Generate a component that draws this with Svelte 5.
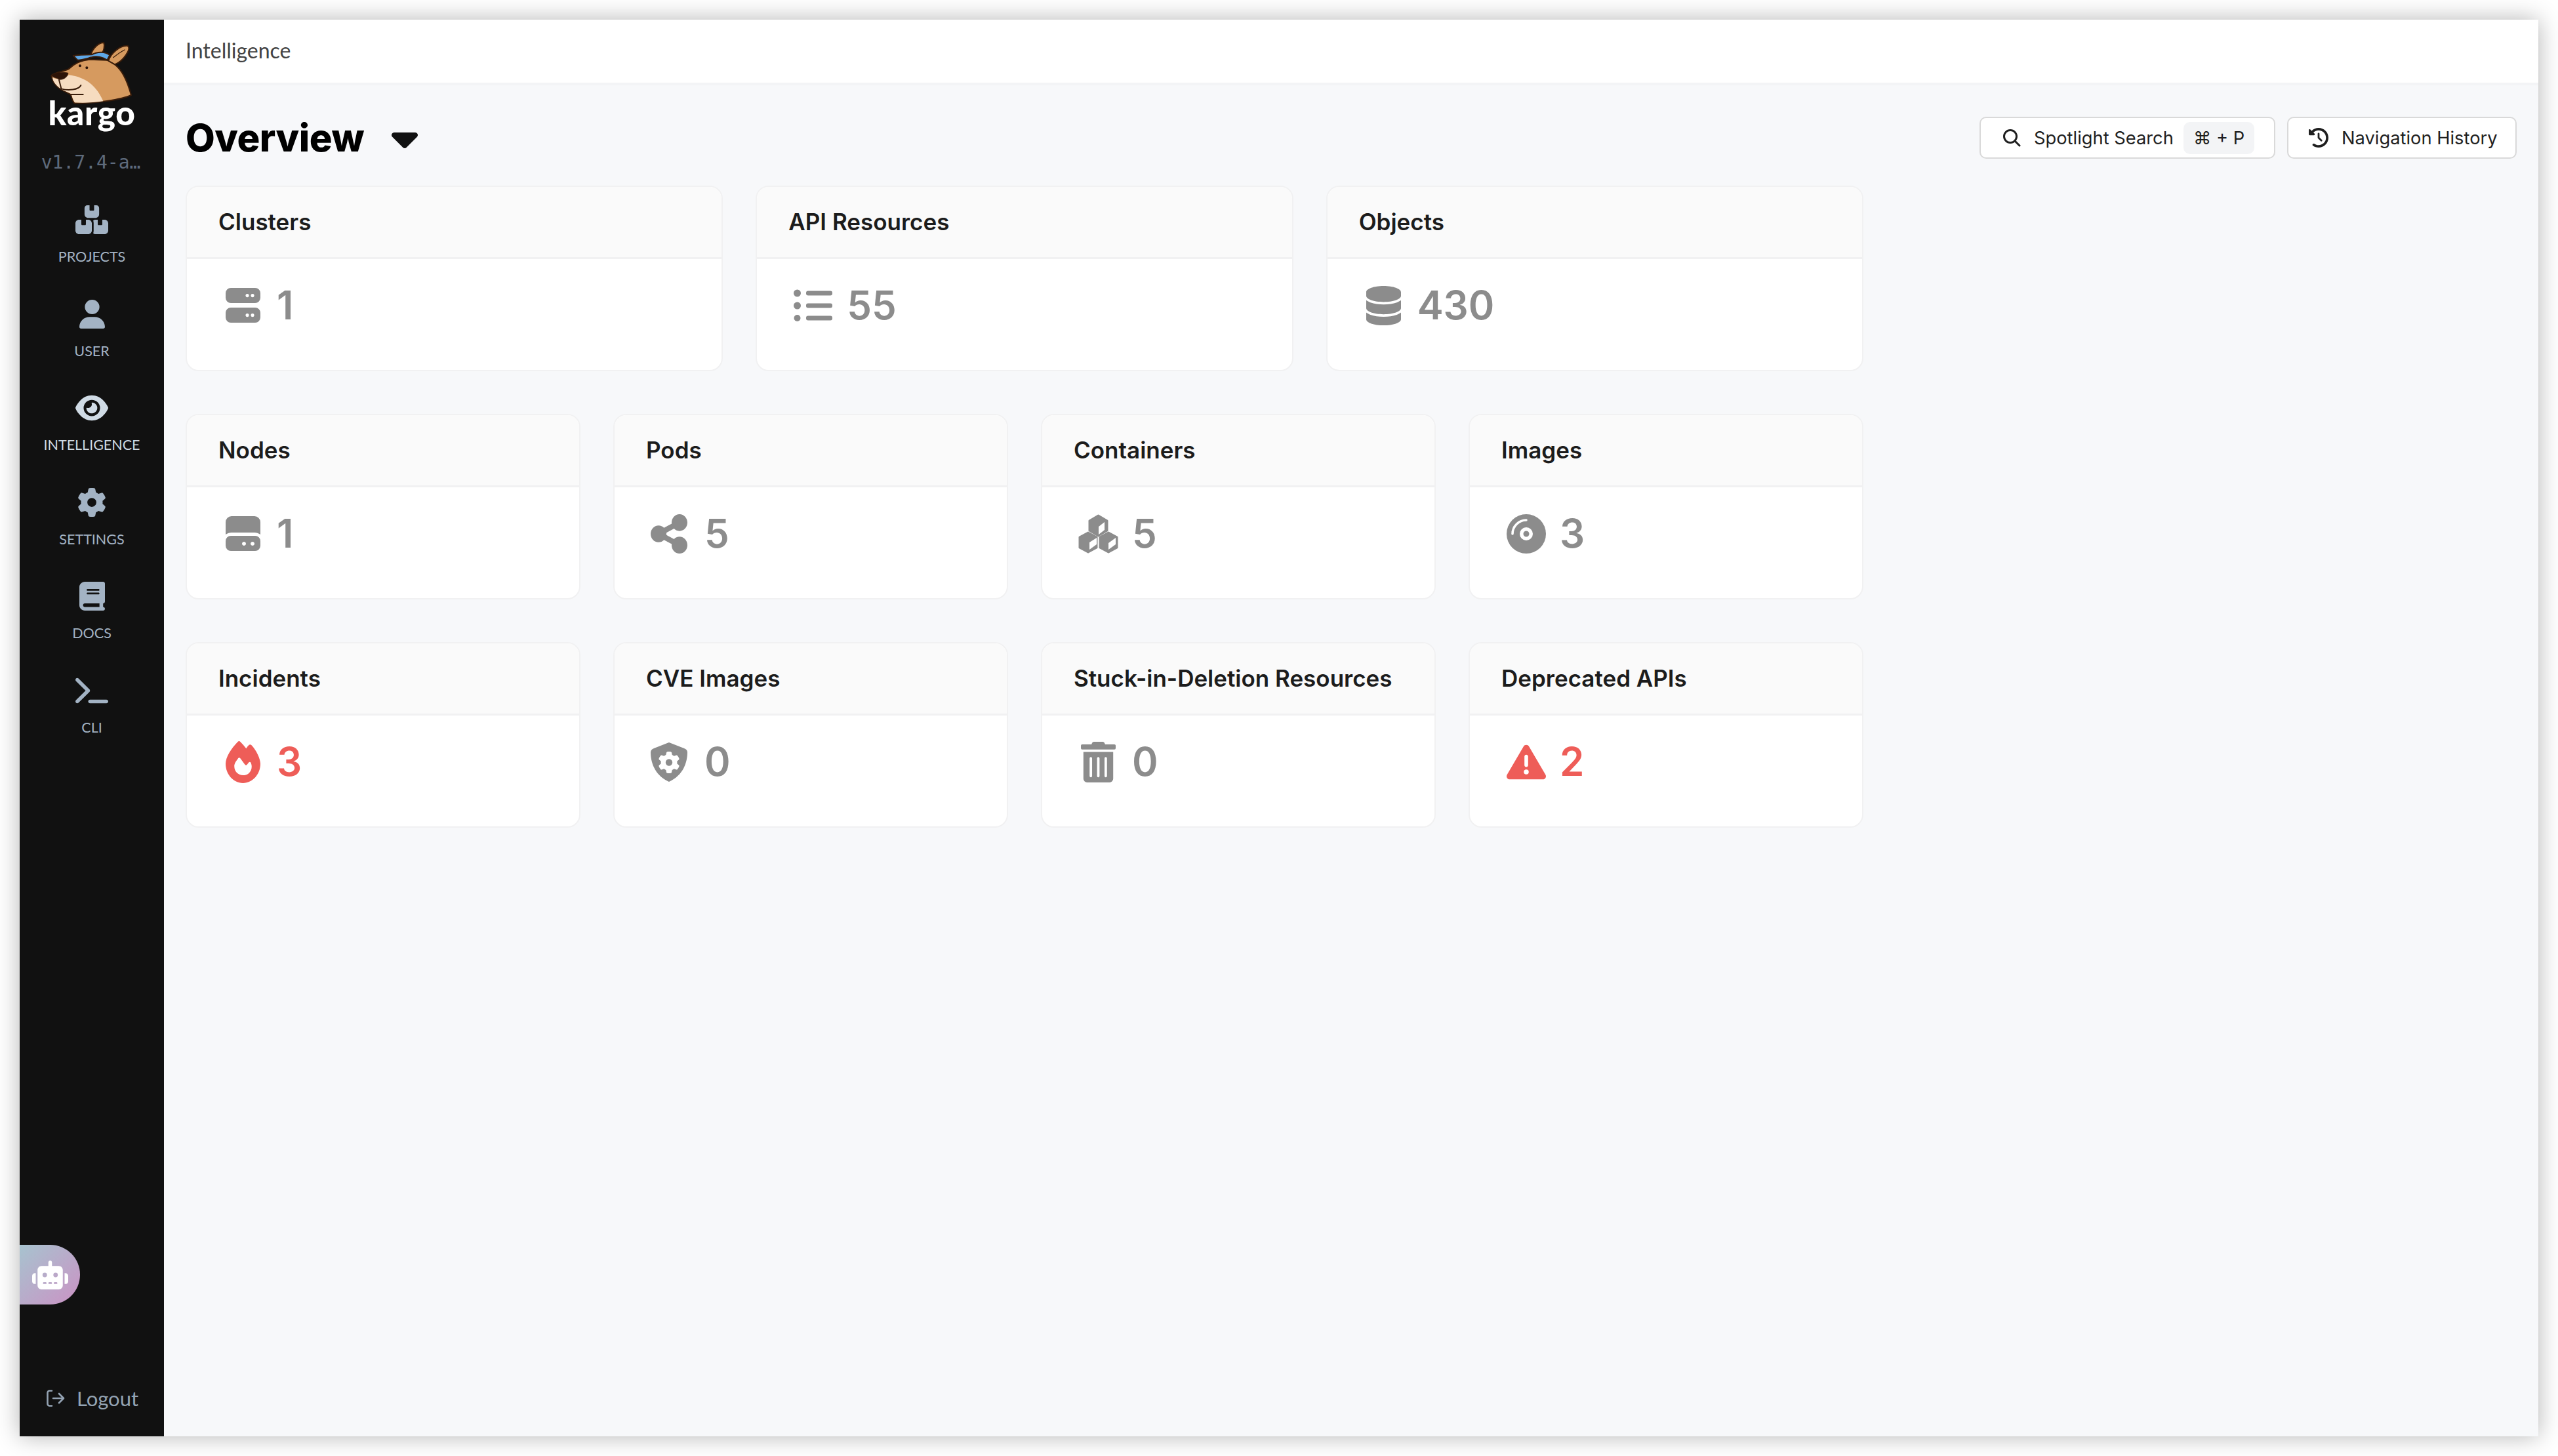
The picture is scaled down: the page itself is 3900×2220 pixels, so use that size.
<script>
  // FontAwesome-style glyphs, drawn in each icon's own viewBox
  const gear = 'M495.9 166.6c3.2 8.7 .5 18.4-6.4 24.6l-43.3 39.4c1.1 8.3 1.7 16.8 1.7 25.4s-.6 17.1-1.7 25.4l43.3 39.4c6.9 6.2 9.6 15.9 6.4 24.6c-4.4 11.9-9.7 23.3-15.8 34.3l-4.7 8.1c-6.6 11-14 21.4-22.1 31.2c-5.9 7.2-15.7 9.6-24.5 6.8l-55.7-17.7c-13.4 10.3-28.2 18.9-44 25.4l-12.5 57.1c-2 9.1-9 16.3-18.2 17.8c-13.8 2.3-28 3.5-42.5 3.5s-28.7-1.2-42.5-3.5c-9.2-1.5-16.2-8.7-18.2-17.8l-12.5-57.1c-15.8-6.5-30.6-15.1-44-25.4L83.1 425.9c-8.8 2.8-18.6 .3-24.5-6.8c-8.1-9.8-15.5-20.2-22.1-31.2l-4.7-8.1c-6.1-11-11.4-22.4-15.8-34.3c-3.2-8.7-.5-18.4 6.4-24.6l43.3-39.4C64.6 273.1 64 264.6 64 256s.6-17.1 1.7-25.4L22.4 191.2c-6.9-6.2-9.6-15.9-6.4-24.6c4.4-11.9 9.7-23.3 15.8-34.3l4.7-8.1c6.6-11 14-21.4 22.1-31.2c5.9-7.2 15.7-9.6 24.5-6.8l55.7 17.7c13.4-10.3 28.2-18.9 44-25.4l12.5-57.1c2-9.1 9-16.3 18.2-17.8C227.3 1.2 241.5 0 256 0s28.7 1.2 42.5 3.5c9.2 1.5 16.2 8.7 18.2 17.8l12.5 57.1c15.8 6.5 30.6 15.1 44 25.4l55.7-17.7c8.8-2.8 18.6-.3 24.5 6.8c8.1 9.8 15.5 20.2 22.1 31.2l4.7 8.1c6.1 11 11.4 22.4 15.8 34.3zM256 336a80 80 0 1 0 0-160 80 80 0 1 0 0 160z';

  const icons = {
    boxes: { vb: '0 0 576 512', w: 50, h: 44, body: '<path d="M248 0H208c-26.5 0-48 21.5-48 48V160c0 35.3 28.7 64 64 64H352c35.3 0 64-28.7 64-64V48c0-26.5-21.5-48-48-48H328V80c0 8.8-7.2 16-16 16H264c-8.8 0-16-7.2-16-16V0zM64 256c-35.3 0-64 28.7-64 64V448c0 35.3 28.7 64 64 64H224c35.3 0 64-28.7 64-64V320c0-35.3-28.7-64-64-64H184v80c0 8.8-7.2 16-16 16H120c-8.8 0-16-7.2-16-16V256H64zM352 512H512c35.3 0 64-28.7 64-64V320c0-35.3-28.7-64-64-64H472v80c0 8.8-7.2 16-16 16H408c-8.8 0-16-7.2-16-16V256H352c-15 0-28.8 5.1-39.7 13.8c4.9 15.1 7.7 31.2 7.7 48.2V448c0 17-2.8 33.1-7.7 48.2C323.2 506.9 337 512 352 512z"/>' },
    user: { vb: '0 0 448 512', w: 39, h: 44, body: '<path d="M224 256A128 128 0 1 0 224 0a128 128 0 1 0 0 256zm-45.7 48C79.8 304 0 383.8 0 482.3C0 498.7 13.3 512 29.7 512H418.3c16.4 0 29.7-13.3 29.7-29.7C448 383.8 368.2 304 269.7 304H178.3z"/>' },
    eye: { vb: '0 0 576 512', w: 50, h: 44, body: '<path d="M288 32c-80.8 0-145.5 36.8-192.6 80.6C48.6 156 17.3 208 2.5 243.7c-3.3 7.9-3.3 16.7 0 24.6C17.3 304 48.6 356 95.4 399.4C142.5 443.2 207.2 480 288 480s145.5-36.8 192.6-80.6c46.8-43.5 78.1-95.4 93-131.1c3.3-7.9 3.3-16.7 0-24.6c-14.9-35.7-46.2-87.7-93-131.1C433.5 68.8 368.8 32 288 32zM144 256a144 144 0 1 1 288 0 144 144 0 1 1 -288 0zm144-64c0 35.3-28.7 64-64 64c-7.1 0-13.9-1.2-20.3-3.3c-5.5-1.8-11.9 1.6-11.7 7.4c.3 6.9 1.3 13.8 3.2 20.7c13.7 51.2 66.4 81.6 117.6 67.9s81.6-66.4 67.9-117.6c-11.1-41.5-47.8-69.4-88.6-71.1c-5.8-.2-9.2 6.1-7.4 11.7c2.1 6.4 3.3 13.2 3.3 20.3z"/>' },
    gear: { vb: '0 0 512 512', w: 44, h: 44, body: `<path d="${gear}"/>` },
    book: { vb: '0 0 448 512', w: 39, h: 44, body: '<path d="M96 0C43 0 0 43 0 96V416c0 53 43 96 96 96H384h32c17.7 0 32-14.3 32-32s-14.3-32-32-32V384c17.7 0 32-14.3 32-32V32c0-17.7-14.3-32-32-32H384 96zm0 384H352v64H96c-17.7 0-32-14.3-32-32s14.3-32 32-32zm32-240c0-8.8 7.2-16 16-16H336c8.8 0 16 7.2 16 16s-7.2 16-16 16H144c-8.8 0-16-7.2-16-16zm16 48H336c8.8 0 16 7.2 16 16s-7.2 16-16 16H144c-8.8 0-16-7.2-16-16s7.2-16 16-16z"/>' },
    terminal: { vb: '0 0 576 512', w: 50, h: 44, body: '<path d="M9.4 86.6C-3.1 74.1-3.1 53.9 9.4 41.4s32.8-12.5 45.3 0l192 192c12.5 12.5 12.5 32.8 0 45.3l-192 192c-12.5 12.5-32.8 12.5-45.3 0s-12.5-32.8 0-45.3L178.7 256 9.4 86.6zM256 416H544c17.7 0 32 14.3 32 32s-14.3 32-32 32H256c-17.7 0-32-14.3-32-32s14.3-32 32-32z"/>' },

    server: { vb: '0 0 53 53', w: 53, h: 53, body: '<path fill-rule="evenodd" d="M8 0H45a8 8 0 0 1 8 8V15a8 8 0 0 1-8 8H8a8 8 0 0 1-8-8V8a8 8 0 0 1 8-8ZM33 9a2.6 2.6 0 1 0 .01 0ZM41 9a2.6 2.6 0 1 0 .01 0ZM8 30H45a8 8 0 0 1 8 8V45a8 8 0 0 1-8 8H8a8 8 0 0 1-8-8V38a8 8 0 0 1 8-8ZM33 39a2.6 2.6 0 1 0 .01 0ZM41 39a2.6 2.6 0 1 0 .01 0Z"/>' },
    list: { vb: '0 0 59 49', w: 59, h: 49, body: '<circle cx="5.5" cy="6" r="5.5"/><circle cx="5.5" cy="25" r="5.5"/><circle cx="5.5" cy="44" r="5"/><rect x="19" y="2.5" width="40" height="7" rx="3"/><rect x="19" y="21.5" width="40" height="7" rx="3"/><rect x="19" y="40.5" width="40" height="7" rx="3"/>' },
    database: { vb: '0 0 448 512', w: 53, h: 60, body: '<path d="M448 80v48c0 44.2-100.3 80-224 80S0 172.2 0 128V80C0 35.8 100.3 0 224 0S448 35.8 448 80zM393.2 214.7c20.8-7.4 39.9-16.9 54.8-28.6V288c0 44.2-100.3 80-224 80S0 332.2 0 288V186.1c14.9 11.8 34 21.2 54.8 28.6C99.7 230.7 159.5 240 224 240s124.3-9.3 169.2-25.3zM0 346.1c14.9 11.8 34 21.2 54.8 28.6C99.7 390.7 159.5 400 224 400s124.3-9.3 169.2-25.3c20.8-7.4 39.9-16.9 54.8-28.6V432c0 44.2-100.3 80-224 80S0 476.2 0 432V346.1z"/>' },
    drive: { vb: '0 0 53 53', w: 53, h: 53, body: '<path d="M9 0H44a9 9 0 0 1 9 9V28C50 26 47 25 44 25H9C6 25 3 26 0 28V9a9 9 0 0 1 9-9Z"/><path fill-rule="evenodd" d="M8 30H45a8 8 0 0 1 8 8V45a8 8 0 0 1-8 8H8a8 8 0 0 1-8-8V38a8 8 0 0 1 8-8ZM28 39a3 3 0 1 0 .01 0ZM41 39a3 3 0 1 0 .01 0Z"/>' },
    share: { vb: '0 32 448 448', w: 56, h: 60, shift: -6, body: '<path d="M352 224c53 0 96-43 96-96s-43-96-96-96s-96 43-96 96c0 4 .2 8 .7 11.9l-94.1 47C145.4 170.2 121.9 160 96 160c-53 0-96 43-96 96s43 96 96 96c25.9 0 49.4-10.2 66.6-26.9l94.1 47c-.5 3.9-.7 7.8-.7 11.9c0 53 43 96 96 96s96-43 96-96s-43-96-96-96c-25.9 0-49.4 10.2-66.6 26.9l-94.1-47c.5-3.9 .7-7.8 .7-11.9s-.2-8-.7-11.9l94.1-47C302.6 213.8 326.1 224 352 224z"/>' },
    cubes: { vb: '0 0 61 60', w: 61, h: 60, body: '<g stroke="currentColor" stroke-width="3" stroke-linejoin="round"><polygon points="30.5,2 44,10 44,25 30.5,33 17,25 17,10"/><polygon points="15,28 28,35 28,51 15,58 2,51 2,35"/><polygon points="46,28 59,35 59,51 46,58 33,51 33,35"/></g><g fill="#fff"><polygon points="31,19 40,12 40,24 31,31"/><polygon points="17,43 28,36 28,46 17,54"/><polygon points="46,44 57,36 57,46 46,54"/></g>' },
    disc: { vb: '0 0 60 60', w: 60, h: 60, body: '<circle cx="30" cy="30" r="30"/><circle cx="30" cy="30" r="7.25" fill="none" stroke="#fff" stroke-width="5.5"/><path d="M9 30A21 21 0 0 1 30 9" fill="none" stroke="#fff" stroke-width="3.5" stroke-linecap="round"/>' },
    fire: { vb: '0 0 448 512', w: 53, h: 64, body: '<path d="M159.3 5.4c7.8-7.3 19.9-7.2 27.7 .1c27.6 25.9 53.5 53.8 77.7 84c11-14.4 23.5-30.1 37-42.9c7.9-7.4 20.1-7.4 28 .1c34.6 33 63.9 76.6 84.5 118c20.3 40.8 33.8 82.5 33.8 111.9C448 404.2 348.2 512 224 512C98.4 512 0 404.1 0 276.5c0-38.4 17.8-85.3 45.4-131.7C73.3 97.7 112.7 48.6 159.3 5.4zM225.7 416c25.3 0 47.7-7 68.8-21c42.1-29.4 53.4-88.2 28.1-134.4c-4.5-9-16-9.6-22.5-2l-25.2 29.3c-6.6 7.6-18.5 7.4-24.7-.5c-16.5-21-46-58.5-62.8-79.8c-6.3-8-18.3-8.1-24.7-.1c-33.8 42.5-50.8 69.3-50.8 99.4C112 375.4 162.6 416 225.7 416z"/>' },
    shield: { vb: '0 0 56 60', w: 56, h: 60, shift: -6, body: `<path d="M28 0L51 9C54 10 56 12 56 15C56 30 50 50 28 60C6 50 0 30 0 15C0 12 2 10 5 9Z"/><g transform="translate(11.5 14) scale(.0645)" fill="#fff"><path d="${gear}"/></g>` },
    trash: { vb: '0 0 448 512', w: 53, h: 62, body: '<path d="M32 464a48 48 0 0 0 48 48h288a48 48 0 0 0 48-48V128H32zm272-256a16 16 0 0 1 32 0v224a16 16 0 0 1-32 0zm-96 0a16 16 0 0 1 32 0v224a16 16 0 0 1-32 0zm-96 0a16 16 0 0 1 32 0v224a16 16 0 0 1-32 0zM432 32H312l-9.4-18.7A24 24 0 0 0 281.1 0H166.8a23.72 23.72 0 0 0-21.4 13.3L136 32H16A16 16 0 0 0 0 48v32a16 16 0 0 0 16 16h416a16 16 0 0 0 16-16V48a16 16 0 0 0-16-16z"/>' },
    warning: { vb: '0 26 512 460', w: 60, h: 54, body: '<path d="M256 32c14.2 0 27.3 7.5 34.5 19.8l216 368c7.3 12.4 7.3 27.7 .2 40.1S486.3 480 472 480H40c-14.3 0-27.6-7.7-34.7-20.1s-7-27.8 .2-40.1l216-368C228.7 39.5 241.8 32 256 32zm0 128c-13.3 0-24 10.7-24 24V296c0 13.3 10.7 24 24 24s24-10.7 24-24V184c0-13.3-10.7-24-24-24zm32 224a32 32 0 1 0 -64 0 32 32 0 1 0 64 0z"/>' },
  };

  const nav = [
    { label: 'PROJECTS', icon: 'boxes' },
    { label: 'USER', icon: 'user' },
    { label: 'INTELLIGENCE', icon: 'eye', active: true },
    { label: 'SETTINGS', icon: 'gear' },
    { label: 'DOCS', icon: 'book' },
    { label: 'CLI', icon: 'terminal' },
  ];

  const rows = [
    [
      { title: 'Clusters', icon: 'server', value: 1 },
      { title: 'API Resources', icon: 'list', value: 55 },
      { title: 'Objects', icon: 'database', value: 430 },
    ],
    [
      { title: 'Nodes', icon: 'drive', value: 1 },
      { title: 'Pods', icon: 'share', value: 5 },
      { title: 'Containers', icon: 'cubes', value: 5 },
      { title: 'Images', icon: 'disc', value: 3 },
    ],
    [
      { title: 'Incidents', icon: 'fire', value: 3, alert: true },
      { title: 'CVE Images', icon: 'shield', value: 0 },
      { title: 'Stuck-in-Deletion Resources', icon: 'trash', value: 0 },
      { title: 'Deprecated APIs', icon: 'warning', value: 2, alert: true },
    ],
  ];
</script>

{#snippet glyph(name)}
  <svg class="glyph" viewBox={icons[name].vb} width={icons[name].w} height={icons[name].h} fill="currentColor" preserveAspectRatio="none" style="margin-left: {icons[name].shift ?? 0}px">
    {@html icons[name].body}
  </svg>
{/snippet}

<div class="window">
  <aside class="sidebar">
    <svg class="logo" viewBox="-30 0 540 510" width="180" height="170">
      <g stroke="#3a1d0a" stroke-width="6" stroke-linejoin="round">
        <path fill="#d69a5f" d="M235 100C245 70 270 45 295 45C300 60 295 85 285 92Z" />
        <path fill="#d69a5f" d="M315 130C325 95 370 55 405 60C420 75 385 130 345 145Z" />
        <path fill="#d69a5f" d="M55 195C75 180 110 178 135 165C160 140 190 125 230 122L310 125L345 145C380 170 405 230 420 285C380 305 250 325 160 322C150 310 148 295 143 282L110 265C80 250 60 225 55 195Z" />
        <path fill="#f6dcc0" stroke="none" d="M60 205C85 218 120 205 135 193C190 200 255 225 292 313C250 320 200 321 162 319C153 308 151 295 146 280L110 263C80 248 62 225 60 205Z" />
        <path fill="#2d1408" stroke-width="2" d="M55 193C75 180 110 178 132 184C130 205 105 218 90 213C75 205 60 205 55 193Z" />
        <path fill="#5ea8e8" d="M155 105C185 100 215 100 240 100C265 85 300 85 322 102L310 125C290 110 260 105 238 112C215 118 195 125 175 125Z" />
        <path fill="none" stroke-linecap="round" d="M90 215L100 255M100 256C130 265 180 262 190 240M145 282L200 282" />
        <path fill="none" stroke-width="4" stroke-linecap="round" d="M338 113C355 100 375 85 390 78" />
      </g>
      <circle cx="186" cy="151" r="6" fill="#2d1408" />
      <circle cx="217" cy="160" r="6" fill="#2d1408" />
      <text class="wordmark" x="240" y="422" text-anchor="middle">kargo</text>
    </svg>
    <div class="version">v1.7.4-a…</div>

    <nav class="nav">
      {#each nav as item}
        <div class="nav-item" class:active={item.active}>
          <span class="nav-icon">{@render glyph(item.icon)}</span>
          <span class="nav-label">{item.label}</span>
        </div>
      {/each}
    </nav>

    <div class="assistant">
      <svg viewBox="0 0 640 512" width="55" height="44" fill="#fff">
        <path d="M320 0c17.7 0 32 14.3 32 32V96H472c39.8 0 72 32.2 72 72V440c0 39.8-32.2 72-72 72H168c-39.8 0-72-32.2-72-72V168c0-39.8 32.2-72 72-72H288V32c0-17.7 14.3-32 32-32zM208 384c-8.8 0-16 7.2-16 16s7.2 16 16 16h32c8.8 0 16-7.2 16-16s-7.2-16-16-16H208zm96 0c-8.8 0-16 7.2-16 16s7.2 16 16 16h32c8.8 0 16-7.2 16-16s-7.2-16-16-16H304zm96 0c-8.8 0-16 7.2-16 16s7.2 16 16 16h32c8.8 0 16-7.2 16-16s-7.2-16-16-16H400zM264 256a40 40 0 1 0 -80 0 40 40 0 1 0 80 0zm152 40a40 40 0 1 0 0-80 40 40 0 1 0 0 80zM48 224H64V416H48c-26.5 0-48-21.5-48-48V272c0-26.5 21.5-48 48-48zm544 0c26.5 0 48 21.5 48 48v96c0 26.5-21.5 48-48 48H576V224h16z" />
      </svg>
    </div>

    <div class="logout">
      <svg viewBox="0 0 28 26" width="28" height="26" fill="none" stroke="currentColor" stroke-width="2.6" stroke-linecap="round" stroke-linejoin="round">
        <path d="M8 1.5H4.5A3 3 0 0 0 1.5 4.5V21.5A3 3 0 0 0 4.5 24.5H8M10 13H26M19 6L26 13L19 20" />
      </svg>
      <span>Logout</span>
    </div>
  </aside>

  <main class="main">
    <header class="crumb">Intelligence</header>

    <div class="content">
      <div class="title-row">
        <h1>Overview</h1>
        <svg class="caret" viewBox="0 0 320 512" width="40" height="64" fill="currentColor">
          <path d="M137.4 374.6c12.5 12.5 32.8 12.5 45.3 0l128-128c9.2-9.2 11.9-22.9 6.9-34.9s-16.6-19.8-29.6-19.8L32 192c-12.9 0-24.6 7.8-29.6 19.8s-2.2 25.7 6.9 34.9l128 128z" />
        </svg>
        <div class="actions">
          <button class="action spotlight">
            <svg viewBox="0 0 28 28" width="28" height="28" fill="none" stroke="currentColor" stroke-width="3" stroke-linecap="round">
              <circle cx="12" cy="12" r="9.5" />
              <path d="M19 19L26 26" />
            </svg>
            <span>Spotlight Search</span>
            <kbd>⌘ + P</kbd>
          </button>
          <button class="action history">
            <svg viewBox="0 0 512 512" width="30" height="30" fill="currentColor">
              <path d="M75 75L41 41C25.9 25.9 0 36.6 0 57.9V168c0 13.3 10.7 24 24 24H134.1c21.4 0 32.1-25.9 17-41l-30.8-30.8C155 85.5 203 64 256 64c106 0 192 86 192 192s-86 192-192 192c-40.8 0-78.6-12.7-109.7-34.4c-14.5-10.1-34.4-6.6-44.6 7.9s-6.6 34.4 7.9 44.6C151.2 495 201.7 512 256 512c141.4 0 256-114.6 256-256S397.4 0 256 0C185.3 0 121.3 28.7 75 75zm181 53c-13.3 0-24 10.7-24 24V256c0 6.4 2.5 12.5 7 17l72 72c9.4 9.4 24.6 9.4 33.9 0s9.4-24.6 0-33.9l-65-65V152c0-13.3-10.7-24-24-24z" />
            </svg>
            <span>Navigation History</span>
          </button>
        </div>
      </div>

      <div class="cards">
        {#each rows as row}
          <div class="card-row" style="--cols: {row.length}">
            {#each row as card}
              <section class="card">
                <div class="card-head">{card.title}</div>
                <div class="card-body" class:alert={card.alert}>
                  <span class="stat-icon">{@render glyph(card.icon)}</span>
                  <span class="stat-value">{card.value}</span>
                </div>
              </section>
            {/each}
          </div>
        {/each}
      </div>
    </div>
  </main>
</div>

<style>
  :global(body) {
    background: #fff;
  }

  .window {
    position: relative;
    display: flex;
    width: 3840px;
    height: 2160px;
    margin: 30px;
    box-shadow: 0 0 34px rgba(0, 0, 0, 0.3);
    font-family: Inter, sans-serif;
  }

  .sidebar {
    display: flex;
    flex-direction: column;
    align-items: center;
    width: 220px;
    flex-shrink: 0;
    background: #111;
    color: #a3b3c4;
  }

  .logo {
    margin-top: 20px;
  }

  .wordmark {
    font-family: Lato, sans-serif;
    font-weight: 900;
    font-size: 154px;
    fill: #fff;
    letter-spacing: 2px;
  }

  .version {
    margin-top: 11px;
    margin-right: 3px;
    font-family: "DejaVu Sans Mono", monospace;
    font-size: 28px;
    line-height: 34px;
    color: #5f6b7c;
  }

  .nav {
    display: flex;
    flex-direction: column;
    align-items: center;
    margin-top: 48px;
    width: 100%;
  }

  .nav-item {
    display: flex;
    flex-direction: column;
    align-items: center;
    height: 143.6px;
  }

  .nav-item.active {
    color: #d0dbe5;
  }

  .nav-icon {
    display: flex;
    align-items: center;
    justify-content: center;
    height: 44px;
  }

  .glyph {
    display: block;
  }

  .nav-label {
    margin-top: 20px;
    font-family: Lato, sans-serif;
    font-size: 21.5px;
    line-height: 28px;
  }

  .assistant {
    position: absolute;
    left: 0;
    top: 1868px;
    display: flex;
    align-items: center;
    justify-content: center;
    width: 92px;
    height: 91px;
    border-radius: 0 46px 46px 0;
    background: linear-gradient(135deg, #a7c3cf, #cb92c4);
  }

  .logout {
    display: flex;
    align-items: center;
    gap: 18px;
    margin-top: auto;
    margin-bottom: 39px;
    padding-left: 2px;
    font-family: Lato, sans-serif;
    font-size: 31px;
    line-height: 38px;
    color: #94a3b3;
  }

  .main {
    display: flex;
    flex-direction: column;
    flex: 1;
    min-width: 0;
    background: #f7f8fa;
  }

  .crumb {
    display: flex;
    align-items: center;
    box-sizing: content-box;
    height: 92px;
    padding: 0 0 4px 33px;
    background: #fff;
    border-bottom: 4px solid #f3f4f6;
    font-family: Lato, sans-serif;
    font-size: 32px;
    color: #434343;
  }

  .content {
    padding: 48px 33px 0;
  }

  .title-row {
    display: flex;
    align-items: center;
    height: 64px;
  }

  h1 {
    margin: 0;
    font-size: 58px;
    font-weight: 800;
    letter-spacing: -0.5px;
    line-height: 64px;
    color: #000;
  }

  .caret {
    margin-left: 42px;
    color: #111;
  }

  .actions {
    display: flex;
    gap: 18px;
    margin-left: auto;
  }

  .action {
    display: flex;
    align-items: center;
    height: 64px;
    padding: 0;
    background: #fff;
    border: 2px solid #d9d9d9;
    border-radius: 10px;
    color: #1f1f1f;
    font-family: Inter, sans-serif;
    font-size: 27.3px;
  }

  .spotlight {
    width: 451px;
    padding-left: 33px;
  }

  .spotlight span {
    margin-left: 20px;
  }

  .history {
    width: 350px;
    padding-left: 31px;
  }

  .history span {
    margin-left: 20px;
  }

  kbd {
    display: flex;
    align-items: center;
    justify-content: center;
    width: 108px;
    height: 49px;
    margin-left: auto;
    margin-right: 30px;
    border-radius: 10px;
    background: #f3f4f6;
    font-family: Inter, "DejaVu Sans", sans-serif;
    font-size: 27.3px;
  }

  .cards {
    display: flex;
    flex-direction: column;
    gap: 65px;
    width: 2558px;
    margin-top: 41px;
  }

  .card-row {
    display: grid;
    grid-template-columns: repeat(var(--cols), 1fr);
    gap: 50px;
  }

  .card {
    display: flex;
    flex-direction: column;
    height: 283px;
    box-sizing: border-box;
    overflow: hidden;
    background: #fff;
    border: 2px solid #f1f1f2;
    border-radius: 20px;
  }

  .card-head {
    display: flex;
    align-items: center;
    box-sizing: border-box;
    height: 110px;
    flex-shrink: 0;
    padding-left: 48px;
    padding-bottom: 2px;
    background: #fafafa;
    border-bottom: 3px solid #f1f1f2;
    font-size: 35px;
    font-weight: 600;
    color: #1c1c1c;
  }

  .card-body {
    display: flex;
    align-items: center;
    height: 75px;
    padding: 33px 48px 0;
    color: #8c8c8c;
  }

  .card-body.alert {
    color: #ee5d58;
  }

  .stat-icon {
    display: flex;
    align-items: center;
    justify-content: center;
    width: 75px;
  }

  .stat-value {
    margin-left: 14px;
    font-size: 60px;
    font-weight: 600;
    line-height: 75px;
  }
</style>
